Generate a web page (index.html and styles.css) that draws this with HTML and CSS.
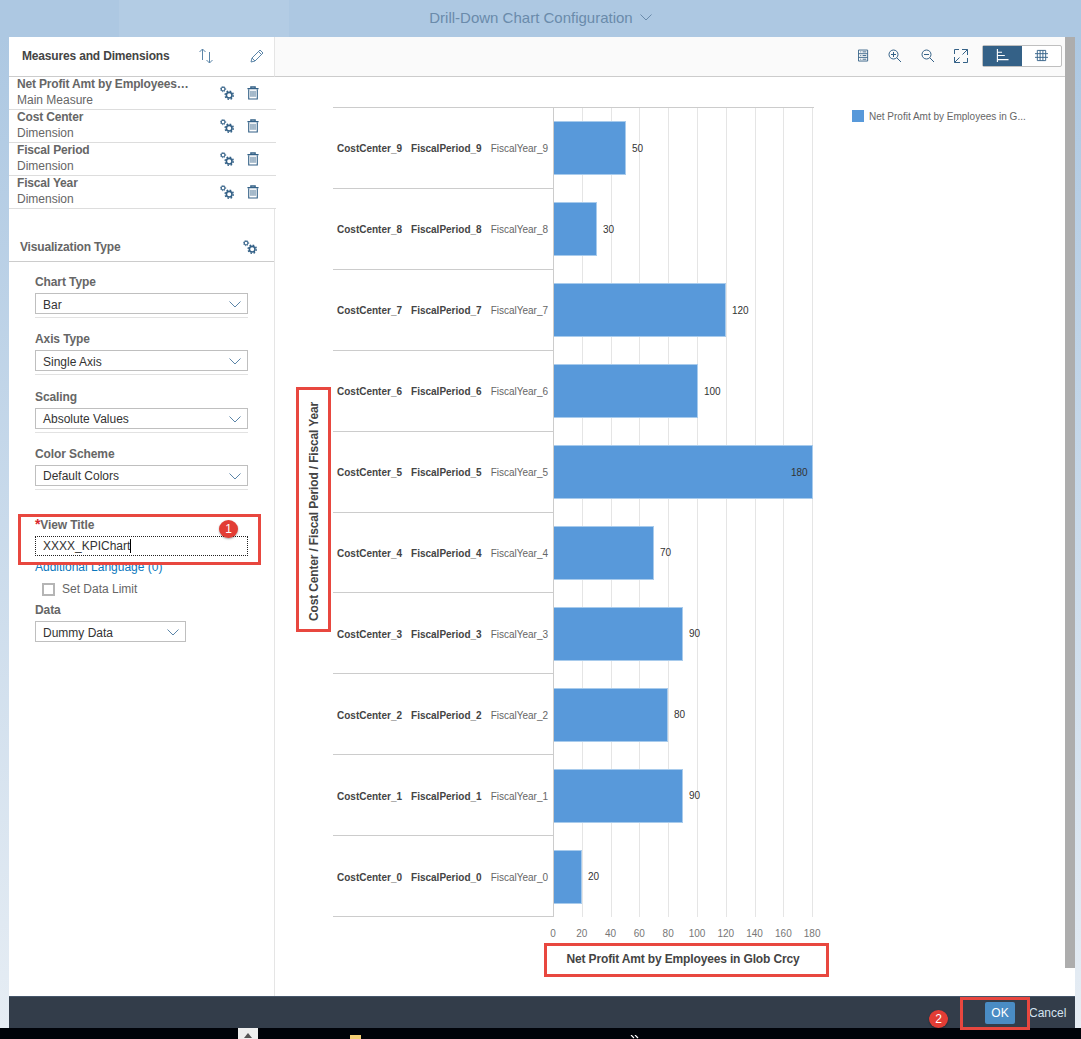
FILE: index.html
```html
<!DOCTYPE html>
<html lang="en">
<head>
  <meta charset="UTF-8">
  <title>Drill-Down Chart Configuration</title>
  <link rel="stylesheet" href="styles.css">
</head>
<body>
  <svg class="sprites" width="0" height="0">
    <symbol id="i-gears" viewBox="0 0 16 16">
      <circle cx="3.500" cy="3.500" r="2.100" fill="none" stroke="currentColor" stroke-width="1.200"/>
      <circle cx="3.500" cy="3.500" r="3" fill="none" stroke="currentColor" stroke-width="1" stroke-dasharray="1.200 1.200"/>
      <circle cx="10.500" cy="10.500" r="3.200" fill="none" stroke="currentColor" stroke-width="1.800"/>
      <circle cx="10.500" cy="10.500" r="4.700" fill="none" stroke="currentColor" stroke-width="1.600" stroke-dasharray="1.900 1.790"/>
    </symbol>
    <symbol id="i-trash" viewBox="0 0 14 16">
      <path d="M0.500 3h13M4.500 3V1h5v2" fill="none" stroke="currentColor" stroke-width="1.500"/>
      <path d="M2 3.500V15h10V3.500" fill="none" stroke="currentColor" stroke-width="1.300"/>
      <path d="M4.500 5.500v7M6 5.500v7M8 5.500v7M9.500 5.500v7" fill="none" stroke="currentColor" stroke-width="0.800"/>
    </symbol>
    <symbol id="i-sort" viewBox="0 0 16 16">
      <path d="M4.500 12V1M1.500 4l3-3 3 3M11.500 4v11M8.500 12l3 3 3-3" fill="none" stroke="currentColor" stroke-width="1"/>
    </symbol>
    <symbol id="i-pencil" viewBox="0 0 14 14">
      <path d="M1 13l1-4L10 1l3 3-8 8zM8.500 2.500l3 3M2 9l3 3" fill="none" stroke="currentColor" stroke-width="1"/>
    </symbol>
    <symbol id="i-list" viewBox="0 0 12 14">
      <path d="M.5.5h10v12h-10zM.5 4.500h10M.5 8.500h10" fill="none" stroke="currentColor" stroke-width="1"/>
      <path d="M2.500 2.500h1M5 2.500h4M2.500 6.500h1M5 6.500h4M2.500 10.500h1M5 10.500h4" fill="none" stroke="currentColor" stroke-width="1"/>
    </symbol>
    <symbol id="i-zoom-in" viewBox="0 0 14 14">
      <circle cx="5.500" cy="5.500" r="4.500" fill="none" stroke="currentColor" stroke-width="1"/>
      <path d="M8.800 8.800l4.200 4.200M3 5.500h5M5.500 3v5" fill="none" stroke="currentColor" stroke-width="1"/>
    </symbol>
    <symbol id="i-zoom-out" viewBox="0 0 14 14">
      <circle cx="5.500" cy="5.500" r="4.500" fill="none" stroke="currentColor" stroke-width="1"/>
      <path d="M8.800 8.800l4.200 4.200M3 5.500h5" fill="none" stroke="currentColor" stroke-width="1"/>
    </symbol>
    <symbol id="i-full" viewBox="0 0 14 14">
      <path d="M8 .5h5.500V6M13.500.5L8.500 5.500M6 13.500H.5V8M.5 13.500l5-5M.5 5V.5H5M13.500 9v4.500H9" fill="none" stroke="currentColor" stroke-width="1"/>
    </symbol>
    <symbol id="i-bars" viewBox="0 0 14 14">
      <path d="M1.500 0v14M1.500 3.500h5M1.500 7h8M1.500 11.500h12" fill="none" stroke="currentColor" stroke-width="1.200"/>
    </symbol>
    <symbol id="i-grid" viewBox="0 0 14 12">
      <path d="M2.500.5h9v11h-9zM2.500 4h9M2.500 8h9M5.500.5v11M8.500.5v11M0 4h2.500M0 8h2.500M11.500 4H14M11.500 8H14" fill="none" stroke="currentColor" stroke-width="1"/>
    </symbol>
    <symbol id="i-chevron" viewBox="0 0 12 7">
      <path d="M.5.500l5.500 5.500 5.500-5.500" fill="none" stroke="currentColor" stroke-width="1"/>
    </symbol>
  </svg>

  <header class="top-bar">
    <span>Drill-Down Chart Configuration</span>
    <svg class="top-chevron"><use href="#i-chevron"/></svg>
  </header>

  <div class="main">
    <div class="dialog">
      <div class="content">
        <aside class="side">
          <div class="side-head">
            <h2>Measures and Dimensions</h2>
            <svg class="icon sort"><use href="#i-sort"/></svg>
            <svg class="icon pencil"><use href="#i-pencil"/></svg>
          </div>

          <div class="item">
            <div class="item-text"><div class="item-name">Net Profit Amt by Employees…</div><div>Main Measure</div></div>
            <svg class="icon gears"><use href="#i-gears"/></svg>
            <svg class="icon trash"><use href="#i-trash"/></svg>
          </div>
          <div class="item">
            <div class="item-text"><div class="item-name">Cost Center</div><div>Dimension</div></div>
            <svg class="icon gears"><use href="#i-gears"/></svg>
            <svg class="icon trash"><use href="#i-trash"/></svg>
          </div>
          <div class="item">
            <div class="item-text"><div class="item-name">Fiscal Period</div><div>Dimension</div></div>
            <svg class="icon gears"><use href="#i-gears"/></svg>
            <svg class="icon trash"><use href="#i-trash"/></svg>
          </div>
          <div class="item">
            <div class="item-text"><div class="item-name">Fiscal Year</div><div>Dimension</div></div>
            <svg class="icon gears"><use href="#i-gears"/></svg>
            <svg class="icon trash"><use href="#i-trash"/></svg>
          </div>

          <div class="viz">
            <div class="viz-head">
              <h2>Visualization Type</h2>
              <svg class="icon gears"><use href="#i-gears"/></svg>
            </div>

            <div class="form">
              <div class="field">
                <label>Chart Type</label>
                <div class="select"><span>Bar</span><svg class="chevron"><use href="#i-chevron"/></svg></div>
              </div>
              <div class="field">
                <label>Axis Type</label>
                <div class="select"><span>Single Axis</span><svg class="chevron"><use href="#i-chevron"/></svg></div>
              </div>
              <div class="field">
                <label>Scaling</label>
                <div class="select"><span>Absolute Values</span><svg class="chevron"><use href="#i-chevron"/></svg></div>
              </div>
              <div class="field">
                <label>Color Scheme</label>
                <div class="select"><span>Default Colors</span><svg class="chevron"><use href="#i-chevron"/></svg></div>
              </div>

              <div class="title-field">
                <label><span class="req">*</span>View Title</label>
                <div class="text-input">XXXX_KPIChart<i class="caret"></i></div>
                <a class="lang-link">Additional Language (0)</a>
                <div class="limit"><span class="checkbox"></span>Set Data Limit</div>
                <label class="data-label">Data</label>
                <div class="select short"><span>Dummy Data</span><svg class="chevron"><use href="#i-chevron"/></svg></div>
              </div>
            </div>
          </div>
        </aside>

        <section class="pane">
          <div class="toolbar">
            <svg class="tool t-list"><use href="#i-list"/></svg>
            <svg class="tool"><use href="#i-zoom-in"/></svg>
            <svg class="tool"><use href="#i-zoom-out"/></svg>
            <svg class="tool"><use href="#i-full"/></svg>
            <div class="toggle">
              <span class="toggle-btn on"><svg><use href="#i-bars"/></svg></span>
              <span class="toggle-btn"><svg><use href="#i-grid"/></svg></span>
            </div>
          </div>

          <div class="chart">
            <div class="y-title"><span>Cost Center / Fiscal Period / Fiscal Year</span></div>

            <div class="chart-body">
              <div class="rows">
                <div class="row">
                  <div class="cats"><b>CostCenter_9</b><b>FiscalPeriod_9</b><span>FiscalYear_9</span></div>
                  <div class="cell"><div class="bar" style="width:72px"></div><span class="val">50</span></div>
                </div>
                <div class="row">
                  <div class="cats"><b>CostCenter_8</b><b>FiscalPeriod_8</b><span>FiscalYear_8</span></div>
                  <div class="cell"><div class="bar" style="width:43px"></div><span class="val">30</span></div>
                </div>
                <div class="row">
                  <div class="cats"><b>CostCenter_7</b><b>FiscalPeriod_7</b><span>FiscalYear_7</span></div>
                  <div class="cell"><div class="bar" style="width:172px"></div><span class="val">120</span></div>
                </div>
                <div class="row">
                  <div class="cats"><b>CostCenter_6</b><b>FiscalPeriod_6</b><span>FiscalYear_6</span></div>
                  <div class="cell"><div class="bar" style="width:144px"></div><span class="val">100</span></div>
                </div>
                <div class="row">
                  <div class="cats"><b>CostCenter_5</b><b>FiscalPeriod_5</b><span>FiscalYear_5</span></div>
                  <div class="cell"><div class="bar" style="width:259px"></div><span class="val inside">180</span></div>
                </div>
                <div class="row">
                  <div class="cats"><b>CostCenter_4</b><b>FiscalPeriod_4</b><span>FiscalYear_4</span></div>
                  <div class="cell"><div class="bar" style="width:100px"></div><span class="val">70</span></div>
                </div>
                <div class="row">
                  <div class="cats"><b>CostCenter_3</b><b>FiscalPeriod_3</b><span>FiscalYear_3</span></div>
                  <div class="cell"><div class="bar" style="width:129px"></div><span class="val">90</span></div>
                </div>
                <div class="row">
                  <div class="cats"><b>CostCenter_2</b><b>FiscalPeriod_2</b><span>FiscalYear_2</span></div>
                  <div class="cell"><div class="bar" style="width:114px"></div><span class="val">80</span></div>
                </div>
                <div class="row">
                  <div class="cats"><b>CostCenter_1</b><b>FiscalPeriod_1</b><span>FiscalYear_1</span></div>
                  <div class="cell"><div class="bar" style="width:129px"></div><span class="val">90</span></div>
                </div>
                <div class="row">
                  <div class="cats"><b>CostCenter_0</b><b>FiscalPeriod_0</b><span>FiscalYear_0</span></div>
                  <div class="cell"><div class="bar" style="width:28px"></div><span class="val">20</span></div>
                </div>
              </div>

              <div class="ticks">
                <span>0</span><span>20</span><span>40</span><span>60</span><span>80</span><span>100</span><span>120</span><span>140</span><span>160</span><span>180</span>
              </div>
              <div class="x-title">Net Profit Amt by Employees in Glob Crcy</div>
            </div>

            <div class="legend"><i class="swatch"></i>Net Profit Amt by Employees in G...</div>
          </div>
        </section>

        <div class="scrollbar"><div class="thumb"></div></div>
      </div>

      <footer class="footer">
        <button class="ok">OK</button>
        <button class="cancel">Cancel</button>
      </footer>
    </div>
  </div>

  <div class="taskbar">
    <span class="tray-tab"></span>
    <span class="tray-file"></span>
    <svg class="tray-more" viewBox="0 0 10 4"><path d="M1 0l3 3M5 0l3 3" fill="none" stroke="#fff" stroke-width="1.2"/></svg>
  </div>

  <!-- annotations painted over the screenshot -->
  <div class="mark mark-title"></div>
  <div class="mark mark-y"></div>
  <div class="mark mark-x"></div>
  <div class="mark mark-ok"></div>
  <div class="badge badge-1">1</div>
  <div class="badge badge-2">2</div>
</body>
</html>
```

FILE: styles.css
```css
* {
  box-sizing: border-box;
}

html, body {
  margin: 0;
  height: 100%;
  overflow: hidden;
}

body {
  position: relative;
  display: flex;
  flex-direction: column;
  width: 1081px;
  height: 1039px;
  font-family: "Liberation Sans", Arial, sans-serif;
  font-size: 12px;
  color: #666;
  background: #adc8e2;
}

.sprites {
  position: absolute;
}

h2 {
  margin: 0;
  font-size: 12px;
  font-weight: bold;
  letter-spacing: -0.17px;
}

/* header */
.top-bar {
  height: 37px;
  flex: none;
  display: flex;
  align-items: center;
  justify-content: center;
  gap: 7px;
  padding-bottom: 3px;
  font-size: 15px;
  color: #6a8bab;
  background: linear-gradient(to right, #adc8e2 0, #adc8e2 119px, #b3cce4 119px, #b3cce4 289px, #adc8e2 289px);
}

.top-chevron {
  width: 12px;
  height: 7px;
}

.main {
  flex: 1;
  display: flex;
  min-height: 0;
  padding-left: 9px;
  padding-right: 6px;
  background: linear-gradient(to bottom, #adc8e2, #e6edf4);
}

.dialog {
  width: 1066px;
  display: flex;
  flex-direction: column;
  background: #fff;
}

.scrollbar {
  width: 10px;
  flex: none;
  background: #fff;
}

.thumb {
  height: 931px;
  background: #adadad;
}

.content {
  flex: 1;
  display: flex;
  min-height: 0;
}

/* left column */
.side {
  width: 266px;
  flex: none;
  display: flex;
  flex-direction: column;
}

.side-head {
  height: 40px;
  flex: none;
  display: flex;
  align-items: center;
  padding: 0 0 2px 13px;
  border-right: 1px solid #e5e5e5;
  border-bottom: 1px solid #ccc;
  color: #444;
}

.side-head h2 {
  width: 176px;
}

.icon {
  flex: none;
  color: #346187;
}

.sort {
  width: 16px;
  height: 16px;
  color: #5b85a8;
}

.pencil {
  width: 14px;
  height: 14px;
  margin-left: 36px;
  color: #5b85a8;
}

.item {
  height: 33px;
  flex: none;
  display: flex;
  align-items: center;
  padding-left: 8px;
  line-height: 16px;
  border-bottom: 1px solid #ddd;
  width: 267px;
  background: #fff;
}

.item-text {
  width: 203px;
  margin-top: -2px;
}

.item-name {
  font-weight: bold;
  letter-spacing: -0.17px;
  white-space: nowrap;
}

.gears {
  width: 14px;
  height: 14px;
}

.trash {
  width: 12px;
  height: 14px;
  margin-left: 13px;
}

.viz {
  flex: 1;
  border-right: 1px solid #e5e5e5;
}

.viz-head {
  height: 53px;
  display: flex;
  align-items: flex-end;
  justify-content: space-between;
  padding: 0 17px 7px 11px;
  border-bottom: 1px solid #ccc;
}

.form {
  padding: 13px 26px 0;
}

.field {
  height: 57.3px;
}

.field label,
.title-field label {
  display: block;
  font-weight: bold;
  letter-spacing: -0.1px;
  line-height: 15px;
  height: 18px;
}

.select {
  height: 21px;
  display: flex;
  align-items: center;
  justify-content: space-between;
  padding: 2px 6px 0 7px;
  color: #333;
  background: #fff;
  border: 1px solid #bfbfbf;
}

.field .select {
  box-shadow: 0 3px 0 #fff, 0 4px 0 #e2e2e2;
}

.select.short {
  width: 151px;
}

.chevron {
  width: 12px;
  height: 7px;
  color: #5b85a8;
}

.title-field {
  margin-top: 13px;
}

.req {
  font-size: 14px;
  color: #d9262b;
}

.text-input {
  height: 20px;
  margin-top: 1px;
  padding-left: 7px;
  display: flex;
  align-items: center;
  color: #333;
  border: 1px dotted #222;
}

.caret {
  width: 1px;
  height: 14px;
  background: #000;
}

.lang-link {
  display: block;
  height: 20px;
  margin-top: 3px;
  line-height: 17px;
  color: #0a77bd;
}

.limit {
  display: flex;
  align-items: center;
  height: 16px;
  margin-top: 2px;
  padding-left: 7px;
  gap: 7px;
}

.checkbox {
  width: 13px;
  height: 13px;
  background: #fff;
  border: 2px solid #b5b5b5;
}

.data-label {
  margin-top: 6px;
}

/* right column */
.pane {
  flex: 1;
  min-width: 0;
  display: flex;
  flex-direction: column;
}

.toolbar {
  height: 40px;
  flex: none;
  display: flex;
  align-items: center;
  justify-content: flex-end;
  gap: 19px;
  padding: 0 3px 2px 0;
  background: #fafafa;
  border-bottom: 1px solid #ccc;
}

.tool {
  width: 14px;
  height: 14px;
  color: #346187;
}

.t-list {
  width: 11px;
}

.toggle {
  display: flex;
  width: 80px;
  height: 22px;
  margin-left: -5px;
  background: #fff;
  border: 1px solid #bfbfbf;
  border-radius: 2px;
}

.toggle-btn {
  flex: 1;
  display: flex;
  align-items: center;
  justify-content: center;
  color: #346187;
}

.toggle-btn svg {
  width: 13px;
  height: 13px;
}

.toggle-btn.on {
  color: #fff;
  background: #346187;
}

/* chart */
.chart {
  flex: 1;
  display: flex;
  padding-top: 30px;
}

.y-title {
  width: 58px;
  height: 809px;
  flex: none;
  display: flex;
  align-items: center;
  justify-content: flex-end;
  padding-right: 12px;
  padding-top: 1px;
}

.y-title span {
  writing-mode: vertical-rl;
  transform: rotate(180deg);
  font-weight: bold;
  letter-spacing: -0.15px;
  color: #444;
}

.chart-body {
  width: 481px;
  flex: none;
}

.rows {
  height: 810px;
  display: grid;
  grid-template-rows: repeat(10, 1fr);
  border-top: 1px solid #ccc;
}

.row {
  display: flex;
  min-height: 0;
}

.cats {
  width: 220px;
  flex: none;
  display: flex;
  align-items: center;
  padding: 2px 0 0 4px;
  gap: 9px;
  font-size: 10px;
  color: #444;
  white-space: nowrap;
  border-bottom: 1px solid #ccc;
}

.cats span {
  color: #666;
}

.cell {
  flex: 1;
  display: flex;
  align-items: center;
  border-left: 1px solid #ccc;
  background: repeating-linear-gradient(to right, transparent 0, transparent 27.8px, #e5e5e5 27.8px, #e5e5e5 28.8px);
}

.bar {
  height: 54px;
  background: #5899da;
  border: 1px solid #a8cbec;
  border-left: 0;
}

.val {
  margin-left: 6px;
  font-size: 10px;
  color: #333;
}

.val.inside {
  margin-left: -22px;
}

.ticks {
  display: flex;
  margin-left: 205.6px;
  margin-top: 11px;
  font-size: 10px;
  color: #777;
}

.ticks span {
  width: 28.8px;
  flex: none;
  text-align: center;
}

.x-title {
  margin-top: 13px;
  margin-left: 220px;
  width: 260px;
  text-align: center;
  white-space: nowrap;
  font-weight: bold;
  letter-spacing: -0.15px;
  color: #444;
}

.legend {
  display: flex;
  align-items: center;
  height: 12px;
  margin-left: 38px;
  margin-top: 3px;
  gap: 5px;
  font-size: 10px;
  white-space: nowrap;
}

.swatch {
  width: 12px;
  height: 12px;
  background: #5899da;
}

/* footer */
.footer {
  height: 32px;
  flex: none;
  display: flex;
  align-items: center;
  justify-content: flex-end;
  padding-right: 10px;
  background: #333d4a;
  border-top: 1px solid #46566a;
}

.footer button {
  font-family: inherit;
  font-size: 12px;
  border: 0;
  padding: 0;
}

.ok {
  width: 30px;
  height: 22px;
  color: #fff;
  background: #4a8cc4;
  border-radius: 2px;
}

.cancel {
  width: 36px;
  margin-left: 14px;
  color: #d4e2ef;
  background: none;
}

/* bottom strip */
.taskbar {
  height: 11px;
  flex: none;
  display: flex;
  background: #000309;
  overflow: hidden;
}

.tray-tab {
  width: 20px;
  margin-left: 238px;
  background: #eee;
  position: relative;
}

.tray-tab::after {
  content: "";
  position: absolute;
  left: 6px;
  top: 5px;
  border: 4px solid transparent;
  border-top: 0;
  border-bottom: 5px solid #555;
}

.tray-file {
  width: 11px;
  height: 4px;
  margin: 7px 0 0 92px;
  background: #f4cf74;
}

.tray-more {
  width: 10px;
  height: 4px;
  margin: 7px 0 0 269px;
}

/* annotations */
.mark {
  position: absolute;
  border: 3px solid #e8473f;
}

.mark-title {
  left: 18px;
  top: 514px;
  width: 243px;
  height: 51px;
}

.mark-y {
  left: 296px;
  top: 387px;
  width: 35px;
  height: 245px;
}

.mark-x {
  left: 544px;
  top: 943px;
  width: 285px;
  height: 34px;
}

.mark-ok {
  left: 960px;
  top: 997px;
  width: 70px;
  height: 33px;
}

.badge {
  position: absolute;
  width: 19px;
  height: 18px;
  font-size: 12px;
  line-height: 18px;
  text-align: center;
  color: #fff;
  background: #e23d35;
  border-radius: 50%;
  box-shadow: 0 1px 2px rgba(0, 0, 0, 0.35);
}

.badge-1 {
  left: 219px;
  top: 520px;
}

.badge-2 {
  left: 929px;
  top: 1010px;
}
```
